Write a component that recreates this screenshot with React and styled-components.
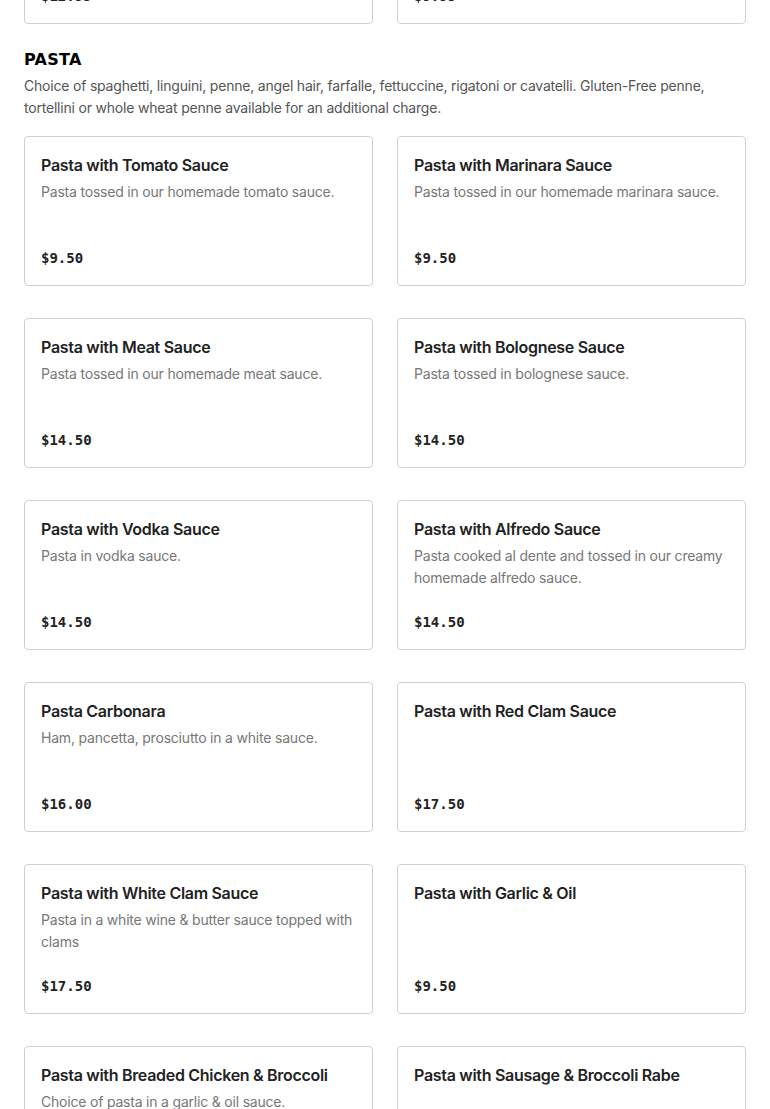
import styled, { createGlobalStyle } from 'styled-components'

const GlobalStyle = createGlobalStyle`
  html, body {
    margin: 0;
    padding: 0;
    background: #fff;
    overflow: hidden;
  }
  body {
    font-family: Inter, "Noto Sans", sans-serif;
    color: #222;
  }
`

const previous = [
  { name: 'Baked Ziti', desc: '', price: '$12.95' },
  { name: 'Side of Meatballs', desc: '', price: '$9.95' }
]

const pasta = [
  { name: 'Pasta with Tomato Sauce', desc: 'Pasta tossed in our homemade tomato sauce.', price: '$9.50' },
  { name: 'Pasta with Marinara Sauce', desc: 'Pasta tossed in our homemade marinara sauce.', price: '$9.50' },
  { name: 'Pasta with Meat Sauce', desc: 'Pasta tossed in our homemade meat sauce.', price: '$14.50' },
  { name: 'Pasta with Bolognese Sauce', desc: 'Pasta tossed in bolognese sauce.', price: '$14.50' },
  { name: 'Pasta with Vodka Sauce', desc: 'Pasta in vodka sauce.', price: '$14.50' },
  { name: 'Pasta with Alfredo Sauce', desc: 'Pasta cooked al dente and tossed in our creamy homemade alfredo sauce.', price: '$14.50' },
  { name: 'Pasta Carbonara', desc: 'Ham, pancetta, prosciutto in a white sauce.', price: '$16.00' },
  { name: 'Pasta with Red Clam Sauce', desc: '', price: '$17.50' },
  { name: 'Pasta with White Clam Sauce', desc: 'Pasta in a white wine & butter sauce topped with clams', price: '$17.50' },
  { name: 'Pasta with Garlic & Oil', desc: '', price: '$9.50' },
  { name: 'Pasta with Breaded Chicken & Broccoli', desc: 'Choice of pasta in a garlic & oil sauce.', price: '$17.50' },
  { name: 'Pasta with Sausage & Broccoli Rabe', desc: '', price: '$17.50' }
]

function MenuCard ({ item }) {
  return (
    <Card>
      <ItemName>{item.name}</ItemName>
      {item.desc && <ItemDesc>{item.desc}</ItemDesc>}
      <Price>{item.price}</Price>
    </Card>
  )
}

export default function App () {
  return (
    <Page>
      <GlobalStyle />
      <Grid $offset>
        {previous.map((item) => <MenuCard key={item.name} item={item} />)}
      </Grid>
      <Section>
        <SectionTitle>PASTA</SectionTitle>
        <SectionDesc>
          Choice of spaghetti, linguini, penne, angel hair, farfalle, fettuccine, rigatoni or cavatelli. Gluten-Free penne,
          tortellini or whole wheat penne available for an additional charge.
        </SectionDesc>
        <Grid>
          {pasta.map((item) => <MenuCard key={item.name} item={item} />)}
        </Grid>
      </Section>
    </Page>
  )
}

const Page = styled.main`
  padding: 0 24px;
  width: 770px;
  box-sizing: border-box;
`

const Grid = styled.div`
  display: grid;
  grid-template-columns: repeat(2, 1fr);
  column-gap: 24px;
  row-gap: 32px;
  margin-top: ${(p) => (p.$offset ? '-126px' : '17px')};
`

const Section = styled.section`
  padding-top: 24px;
`

const SectionTitle = styled.h2`
  margin: 0;
  font-family: "DejaVu Sans", "Liberation Sans", sans-serif;
  font-weight: 800;
  font-size: 16px;
  line-height: 24px;
  letter-spacing: 0.3px;
  color: #000;
`

const SectionDesc = styled.p`
  margin: 3px 0 0;
  font-size: 14px;
  line-height: 22px;
  letter-spacing: -0.2px;
  color: #555;
`

const Card = styled.div`
  box-sizing: border-box;
  height: 150px;
  border: 1px solid #cfcfcf;
  border-radius: 4px;
  padding: 16px;
  display: flex;
  flex-direction: column;
  background: #fff;
`

const ItemName = styled.h3`
  margin: 0;
  font-size: 16px;
  line-height: 24px;
  font-weight: 600;
  letter-spacing: -0.3px;
  color: #222;
`

const ItemDesc = styled.p`
  margin: 4px 0 0;
  font-size: 14px;
  line-height: 22px;
  letter-spacing: -0.2px;
  color: #777;
`

const Price = styled.div`
  margin-top: auto;
  font-family: "DejaVu Sans Mono", "Liberation Mono", monospace;
  font-weight: 700;
  font-size: 14px;
  line-height: 22px;
  color: #222;
`
